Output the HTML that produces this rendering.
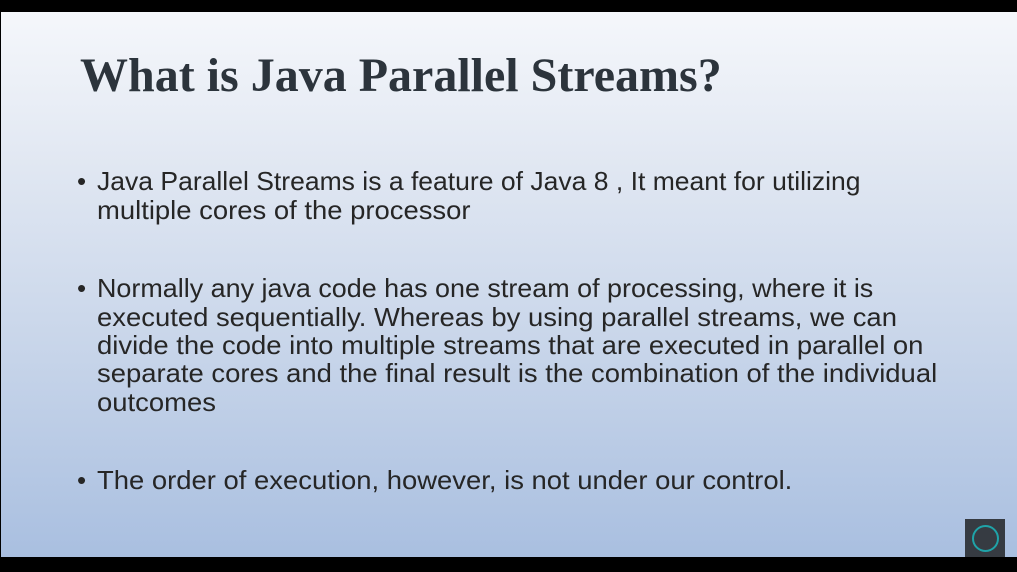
<!DOCTYPE html>
<html><head><style>
html,body{margin:0;padding:0;width:1017px;height:572px;overflow:hidden;background:#000}
.slide{position:absolute;left:1px;top:12px;width:1016px;height:545px;background:linear-gradient(#f5f7fb 0%,#e3e9f3 25%,#c9d6ea 60%,#a9bfe0 100%)}
.t{position:absolute;left:80px;top:48px;font:bold 48px "Liberation Serif",serif;color:#2c343c;white-space:nowrap}
.l{position:absolute;left:97px;font:26px "Liberation Sans",sans-serif;color:#262626;white-space:nowrap;transform:scaleX(1.055);transform-origin:0 0}
.b{position:absolute;left:77px;font:26px "Liberation Sans",sans-serif;color:#262626}
.logo{position:absolute;left:965px;top:519px;width:40px;height:38px;background:#363b42}
.logo div{position:absolute;left:7px;top:6px;width:23px;height:23px;border:2px solid #1fa3a8;border-radius:50%}
</style></head><body>
<div class="slide"></div>
<div class="t">What is Java Parallel Streams?</div>
<div class="b" style="top:166px">•</div>
<div class="l" style="top:166px;transform:scaleX(1.02)">Java Parallel Streams is a feature of Java 8 , It meant for utilizing</div>
<div class="l" style="top:195px">multiple cores of the processor</div>
<div class="b" style="top:273px">•</div>
<div class="l" style="top:273px;transform:scaleX(1.035)">Normally any java code has one stream of processing, where it is</div>
<div class="l" style="top:302px">executed sequentially. Whereas by using parallel streams, we can</div>
<div class="l" style="top:330px">divide the code into multiple streams that are executed in parallel on</div>
<div class="l" style="top:358px">separate cores and the final result is the combination of the individual</div>
<div class="l" style="top:387px">outcomes</div>
<div class="b" style="top:465px">•</div>
<div class="l" style="top:465px">The order of execution, however, is not under our control.</div>
<div class="logo"><div></div></div>
</body></html>
